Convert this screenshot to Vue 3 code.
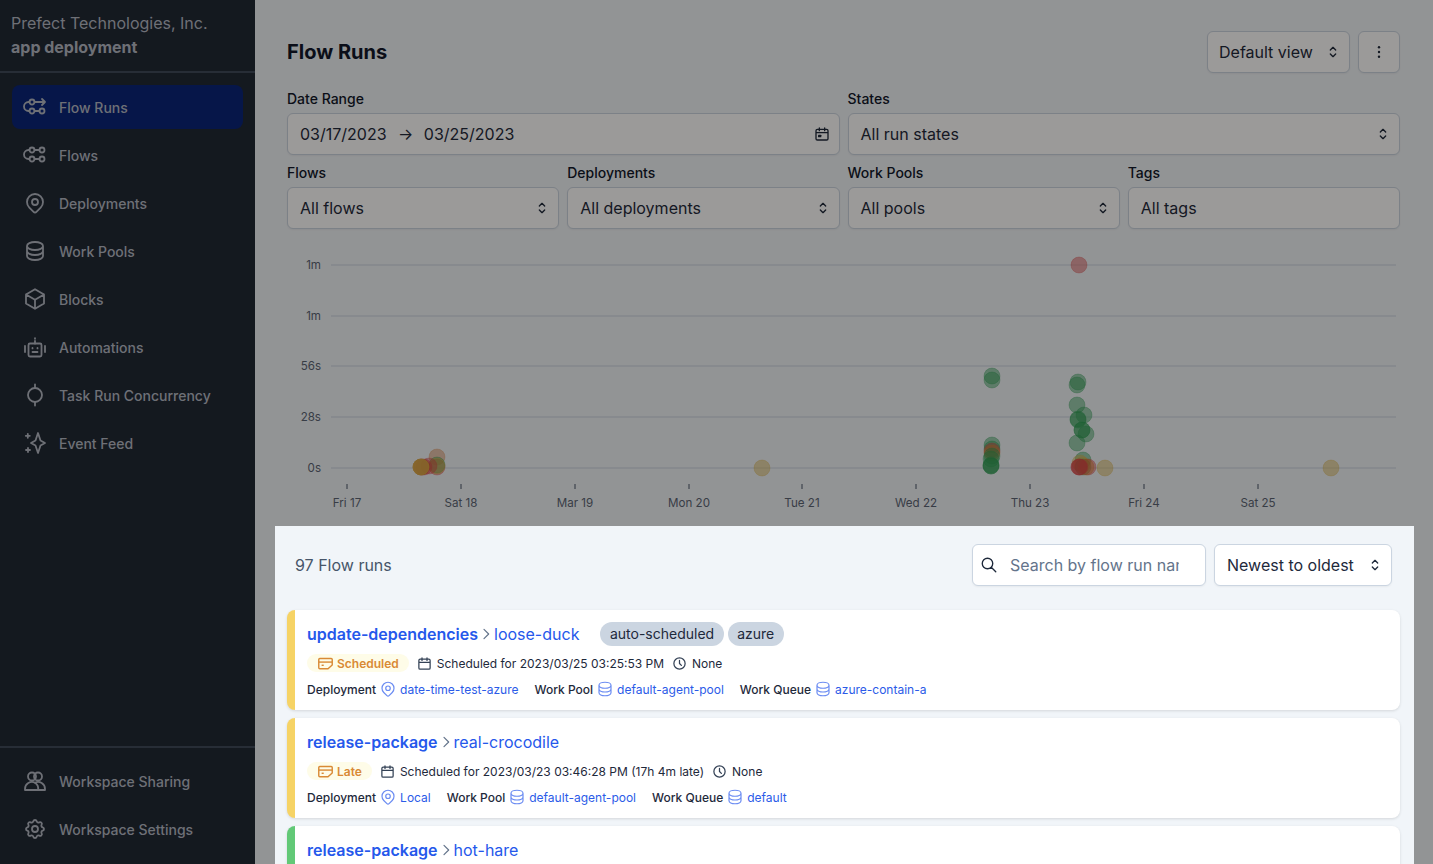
<script setup>
const icons = {
  flowRuns: ['M6.5 7H5.5a4.5 4.5 0 000 9h1', 'M11.5 7H22m-3-3l3 3-3 3', 'M11.5 16h5', 'M11.5 7a2.5 2.5 0 11-5 0 2.5 2.5 0 015 0z', 'M11.5 16a2.5 2.5 0 11-5 0 2.5 2.5 0 015 0z', 'M21.5 16a2.5 2.5 0 11-5 0 2.5 2.5 0 015 0z'],
  flows: ['M6.5 7H5.5a4.5 4.5 0 000 9h1', 'M11.5 7h5', 'M11.5 16h5', 'M11.5 7a2.5 2.5 0 11-5 0 2.5 2.5 0 015 0z', 'M21.5 7a2.5 2.5 0 11-5 0 2.5 2.5 0 015 0z', 'M11.5 16a2.5 2.5 0 11-5 0 2.5 2.5 0 015 0z', 'M21.5 16a2.5 2.5 0 11-5 0 2.5 2.5 0 015 0z'],
  pin: ['M17.657 16.657L13.414 20.9a1.998 1.998 0 01-2.827 0l-4.244-4.243a8 8 0 1111.314 0z', 'M15 11a3 3 0 11-6 0 3 3 0 016 0z'],
  database: ['M4 7v10c0 2.21 3.582 4 8 4s8-1.79 8-4V7M4 7c0 2.21 3.582 4 8 4s8-1.79 8-4M4 7c0-2.21 3.582-4 8-4s8 1.79 8 4m0 5c0 2.21-3.582 4-8 4s-8-1.79-8-4'],
  cube: ['M21 7.5l-9-5.25L3 7.5m18 0l-9 5.25m9-5.25v9l-9 5.25M3 7.5l9 5.25M3 7.5v9l9 5.25m0-9v9'],
  robot: ['M7 8.5h10a1.5 1.5 0 011.5 1.5v10a1.5 1.5 0 01-1.5 1.5H7A1.5 1.5 0 015.500 20V10A1.500 1.500 0 017 8.500z', 'M12 8.500V6', 'M12 3.200v.600', 'M9.500 13v.400', 'M14.500 13v.400', 'M9.500 17h5', 'M2 11v6', 'M22 11v6'],
  concurrency: ['M19 12a7 7 0 11-14 0 7 7 0 0114 0z', 'M12 1.500V5', 'M12 19v3.500'],
  sparkles: ['M15 2l2.500 7.500L22 12l-4.500 2.500L15 22l-2.500-7.500L8 12l4.500-2.500z', 'M4.800 2.800v4M2.800 4.800h4', 'M5 17v4M3 19h4'],
  users: ['M13 7.500a4 4 0 11-8 0 4 4 0 018 0z', 'M19 7.500a4 4 0 11-8 0 4 4 0 018 0z', 'M2 21v-1a7 7 0 0110-6.300A7 7 0 0122 20v1z', 'M12 13.700a7 7 0 013 7.300'],
  cog: ['M10.325 4.317c.426-1.756 2.924-1.756 3.35 0a1.724 1.724 0 002.573 1.066c1.543-.94 3.31.826 2.37 2.37a1.724 1.724 0 001.065 2.572c1.756.426 1.756 2.924 0 3.35a1.724 1.724 0 00-1.066 2.573c.94 1.543-.826 3.31-2.37 2.37a1.724 1.724 0 00-2.572 1.065c-.426 1.756-2.924 1.756-3.35 0a1.724 1.724 0 00-2.573-1.066c-1.543.94-3.31-.826-2.37-2.37a1.724 1.724 0 00-1.065-2.572c-1.756-.426-1.756-2.924 0-3.35a1.724 1.724 0 001.066-2.573c-.94-1.543.826-3.31 2.37-2.37.996.608 2.296.07 2.572-1.065z', 'M15 12a3 3 0 11-6 0 3 3 0 016 0z'],
  calendar: ['M8 7V3m8 4V3M3 10h18M5 21h14a2 2 0 002-2V7a2 2 0 00-2-2H5a2 2 0 00-2 2v12a2 2 0 002 2z'],
  clock: ['M12 7v5l3 3m6-3a9 9 0 11-18 0 9 9 0 0118 0z'],
  search: ['M21 21l-6-6m2-5a7 7 0 11-14 0 7 7 0 0114 0z'],
  selector: ['M8 9l4-4 4 4m0 6l-4 4-4-4'],
  chevron: ['M9 5l7 7-7 7'],
  scheduled: ['M4 5h16a1.500 1.500 0 011.500 1.500V14l-6 5.500H4a1.500 1.500 0 01-1.500-1.500V6.500A1.500 1.500 0 014 5z', 'M2.500 10h19', 'M6.500 14.500h3'],
}

const navItems = [
  { label: 'Flow Runs', icon: 'flowRuns', active: true },
  { label: 'Flows', icon: 'flows' },
  { label: 'Deployments', icon: 'pin' },
  { label: 'Work Pools', icon: 'database' },
  { label: 'Blocks', icon: 'cube' },
  { label: 'Automations', icon: 'robot' },
  { label: 'Task Run Concurrency', icon: 'concurrency' },
  { label: 'Event Feed', icon: 'sparkles' },
]
const footerItems = [
  { label: 'Workspace Sharing', icon: 'users' },
  { label: 'Workspace Settings', icon: 'cog' },
]

const filters = [
  { label: 'Flows', value: 'All flows', select: true },
  { label: 'Deployments', value: 'All deployments', select: true },
  { label: 'Work Pools', value: 'All pools', select: true },
  { label: 'Tags', value: 'All tags' },
]

// chart coordinates are page pixels, the svg viewBox starts at the chart's corner
const gridLines = [
  { y: 265, label: '1m' },
  { y: 316, label: '1m' },
  { y: 366, label: '56s' },
  { y: 417, label: '28s' },
  { y: 468, label: '0s' },
]
const ticks = [
  { x: 347, label: 'Fri 17' },
  { x: 461, label: 'Sat 18' },
  { x: 575, label: 'Mar 19' },
  { x: 689, label: 'Mon 20' },
  { x: 802, label: 'Tue 21' },
  { x: 916, label: 'Wed 22' },
  { x: 1030, label: 'Thu 23' },
  { x: 1144, label: 'Fri 24' },
  { x: 1258, label: 'Sat 25' },
]
const colors = { g: '#2f9e55', r: '#d94848', y: '#d9b44a', o: '#e08030', b: '#d98a50' }
const dots = [
  ['r', 1079, 265], ['y', 762, 468], ['y', 1105, 468], ['y', 1331, 468],
  ['g', 992, 376], ['g', 992, 380], ['g', 992, 445], ['g', 992, 449], ['r', 992, 451], ['o', 992, 453], ['g', 992, 456], ['g', 991, 459], ['g', 991, 465], ['g', 991, 466], ['g', 991, 466],
  ['g', 1078, 382], ['g', 1077, 385], ['g', 1077, 405], ['g', 1084, 415], ['g', 1078, 419], ['g', 1078, 420], ['g', 1082, 430], ['g', 1082, 430], ['g', 1086, 434], ['g', 1077, 443], ['g', 1083, 460],
  ['y', 1080, 463], ['y', 1082, 465], ['g', 1083, 467], ['r', 1088, 467], ['o', 1086, 467], ['r', 1079, 467], ['r', 1080, 467], ['r', 1079, 467],
  ['b', 437, 457], ['r', 437, 467], ['g', 437, 465], ['y', 437, 466], ['r', 429, 466], ['r', 424, 467], ['r', 422, 467], ['o', 421, 467], ['o', 421, 467], ['y', 421, 467], ['y', 421, 467],
]

const runs = [
  {
    flow: 'update-dependencies', name: 'loose-duck', tags: ['auto-scheduled', 'azure'], color: '#f6d365',
    state: 'Scheduled', start: 'Scheduled for 2023/03/25 03:25:53 PM',
    deployment: 'date-time-test-azure', pool: 'default-agent-pool', queue: 'azure-contain-a',
  },
  {
    flow: 'release-package', name: 'real-crocodile', tags: [], color: '#f6d365',
    state: 'Late', start: 'Scheduled for 2023/03/23 03:46:28 PM (17h 4m late)',
    deployment: 'Local', pool: 'default-agent-pool', queue: 'default',
  },
  {
    flow: 'release-package', name: 'hot-hare', tags: [], color: '#62c977',
    state: 'Completed', start: 'None',
    deployment: 'Local', pool: 'default-agent-pool', queue: 'default',
  },
]
</script>

<template>
  <div class="app">
    <aside class="sidebar">
      <div class="org">
        <div class="org-name">Prefect Technologies, Inc.</div>
        <div class="org-app">app deployment</div>
      </div>
      <nav class="nav">
        <a v-for="item in navItems" :key="item.label" class="nav-item" :class="{ active: item.active }">
          <svg class="nav-icon" viewBox="0 0 24 24"><path v-for="d in icons[item.icon]" :key="d" :d="d" /></svg>
          {{ item.label }}
        </a>
      </nav>
      <div class="nav nav-footer">
        <a v-for="item in footerItems" :key="item.label" class="nav-item">
          <svg class="nav-icon" viewBox="0 0 24 24"><path v-for="d in icons[item.icon]" :key="d" :d="d" /></svg>
          {{ item.label }}
        </a>
      </div>
    </aside>

    <main class="main">
      <header class="page-head">
        <h1>Flow Runs</h1>
        <div class="head-actions">
          <div class="box view-select">
            <span>Default view</span>
            <svg class="sel-icon" viewBox="0 0 24 24"><path :d="icons.selector[0]" /></svg>
          </div>
          <div class="box more-btn">
            <svg viewBox="0 0 20 20" width="16" height="16"><circle cx="10" cy="4" r="1.500" /><circle cx="10" cy="10" r="1.500" /><circle cx="10" cy="16" r="1.500" /></svg>
          </div>
        </div>
      </header>

      <section class="filters">
        <div class="field wide">
          <label>Date Range</label>
          <div class="box">
            <span class="dates">03/17/2023 <span class="arrow">→</span> 03/25/2023</span>
            <svg class="sel-icon cal-icon" viewBox="0 0 24 24"><path :d="icons.calendar[0]" /><path d="M7 14h3v2H7z" /></svg>
          </div>
        </div>
        <div class="field wide">
          <label>States</label>
          <div class="box">
            <span>All run states</span>
            <svg class="sel-icon" viewBox="0 0 24 24"><path :d="icons.selector[0]" /></svg>
          </div>
        </div>
        <div v-for="f in filters" :key="f.label" class="field">
          <label>{{ f.label }}</label>
          <div class="box">
            <span>{{ f.value }}</span>
            <svg v-if="f.select" class="sel-icon" viewBox="0 0 24 24"><path :d="icons.selector[0]" /></svg>
          </div>
        </div>
      </section>

      <svg class="chart" viewBox="287 245 1113 281">
        <g v-for="line in gridLines" :key="line.y">
          <line x1="331" x2="1396" :y1="line.y" :y2="line.y" class="grid-line" />
          <text x="321" :y="line.y + 4" text-anchor="end" class="axis-text">{{ line.label }}</text>
        </g>
        <g v-for="tick in ticks" :key="tick.x">
          <line :x1="tick.x" :x2="tick.x" y1="484" y2="489" class="tick" />
          <text :x="tick.x" y="507" text-anchor="middle" class="axis-text">{{ tick.label }}</text>
        </g>
        <circle v-for="(dot, i) in dots" :key="i" class="dot" :cx="dot[1]" :cy="dot[2]" r="8" :fill="colors[dot[0]]" :stroke="colors[dot[0]]" />
      </svg>

      <!-- the huge box-shadow is the dimmed backdrop around this highlighted section -->
      <section class="runs">
        <div class="runs-head">
          <span class="runs-count">97 Flow runs</span>
          <div class="runs-tools">
            <div class="box search">
              <svg class="search-icon" viewBox="0 0 24 24"><path :d="icons.search[0]" /></svg>
              <input type="text" placeholder="Search by flow run name" />
            </div>
            <div class="box sort">
              <span>Newest to oldest</span>
              <svg class="sel-icon" viewBox="0 0 24 24"><path :d="icons.selector[0]" /></svg>
            </div>
          </div>
        </div>

        <div class="run-list">
          <article v-for="run in runs" :key="run.name" class="run" :style="{ borderLeftColor: run.color }">
            <div class="run-title">
              <a class="flow-name">{{ run.flow }}</a>
              <svg class="chev" viewBox="0 0 24 24"><path :d="icons.chevron[0]" /></svg>
              <a class="run-name">{{ run.name }}</a>
              <div v-if="run.tags.length" class="tags">
                <span v-for="tag in run.tags" :key="tag" class="tag">{{ tag }}</span>
              </div>
            </div>
            <div class="run-row">
              <span class="state">
                <svg viewBox="0 0 24 24"><path v-for="d in icons.scheduled" :key="d" :d="d" /></svg>
                {{ run.state }}
              </span>
              <span class="meta">
                <svg class="meta-icon" viewBox="0 0 24 24"><path :d="icons.calendar[0]" /></svg>
                {{ run.start }}
              </span>
              <span class="meta">
                <svg class="meta-icon" viewBox="0 0 24 24"><path :d="icons.clock[0]" /></svg>
                None
              </span>
            </div>
            <div class="run-row links">
              <span class="rel">
                <b>Deployment</b>
                <svg class="rel-icon" viewBox="0 0 24 24"><path v-for="d in icons.pin" :key="d" :d="d" /></svg>
                <a>{{ run.deployment }}</a>
              </span>
              <span class="rel">
                <b>Work Pool</b>
                <svg class="rel-icon" viewBox="0 0 24 24"><path :d="icons.database[0]" /></svg>
                <a>{{ run.pool }}</a>
              </span>
              <span class="rel">
                <b>Work Queue</b>
                <svg class="rel-icon" viewBox="0 0 24 24"><path :d="icons.database[0]" /></svg>
                <a>{{ run.queue }}</a>
              </span>
            </div>
          </article>
        </div>
      </section>
    </main>
  </div>
</template>

<style>
html,
body {
  margin: 0;
  overflow: hidden;
}
</style>

<style scoped>
.app {
  display: flex;
  width: 100%;
  height: 864px;
  overflow: hidden;
  background: #f1f5f9;
  color: #0f172a;
  font-family: Inter, "Liberation Sans", sans-serif;
  font-size: 16px;
}

/* Sidebar */
.sidebar {
  flex: none;
  width: 255px;
  display: flex;
  flex-direction: column;
  background: #1f2835;
  color: #b4bac5;
}

.org {
  box-sizing: border-box;
  height: 73px;
  padding: 11px 11px 0;
  border-bottom: 2px solid #3f4a5a;
  line-height: 24px;
}

.org-app {
  font-weight: 700;
}

.nav {
  display: flex;
  flex-direction: column;
  gap: 4px;
  padding: 12px;
  flex: 1;
}

.nav-footer {
  flex: none;
  padding: 11px 12px 13px;
  border-top: 2px solid #3f4a5a;
}

.nav-item {
  display: flex;
  align-items: center;
  gap: 12px;
  height: 44px;
  padding: 0 11px;
  border-radius: 8px;
  font-size: 14px;
  font-weight: 500;
}

.nav-item.active {
  background: #08247a;
}

.nav-icon {
  flex: none;
  width: 24px;
  height: 24px;
  fill: none;
  stroke: currentColor;
  stroke-width: 1.800;
  stroke-linecap: round;
  stroke-linejoin: round;
}

/* Main */
.main {
  flex: 1;
  min-width: 0;
  padding: 31px 33px 0 32px;
}

.page-head {
  display: flex;
  align-items: center;
  justify-content: space-between;
}

.page-head h1 {
  margin: 0;
  font-size: 20px;
  font-weight: 700;
}

.head-actions {
  display: flex;
  gap: 8px;
}

.box {
  display: flex;
  align-items: center;
  justify-content: space-between;
  box-sizing: border-box;
  height: 42px;
  padding: 0 12px;
  background: #fff;
  border: 1px solid #cbd5e1;
  border-radius: 6px;
  box-shadow: 0 1px 2px rgba(0, 0, 0, 0.05);
  color: #1e293b;
}

.view-select {
  width: 143px;
  padding-left: 11px;
}

.more-btn {
  width: 42px;
  justify-content: center;
}

.more-btn svg {
  fill: #1e293b;
}

.sel-icon {
  flex: none;
  width: 16px;
  height: 16px;
  margin-right: -4px;
  fill: none;
  stroke: #1e293b;
  stroke-width: 2;
  stroke-linecap: round;
  stroke-linejoin: round;
}

.cal-icon {
  margin-right: -3px;
}

.filters {
  display: grid;
  grid-template-columns: repeat(4, 1fr);
  gap: 8px;
  margin-top: 16px;
}

.field {
  min-width: 0;
}

.field.wide {
  grid-column: span 2;
}

.field label {
  display: block;
  margin-bottom: 4px;
  font-size: 14px;
  line-height: 20px;
  font-weight: 500;
}

.dates {
  white-space: pre;
}

.arrow {
  margin: 0 6px 0 7px;
}

.chart {
  display: block;
  width: 1113px;
  height: 281px;
  margin-top: 16px;
}

.grid-line {
  stroke: #cbd5e1;
  stroke-width: 1;
}

.tick {
  stroke: #475569;
  stroke-width: 1;
}

.axis-text {
  font-size: 11.600px;
  fill: #5b6575;
}

.dot {
  fill-opacity: 0.45;
  stroke-opacity: 0.3;
  stroke-width: 1;
}

/* Highlighted list */
.runs {
  position: relative;
  z-index: 10;
  margin: 0 -14px 0 -12px;
  padding: 18px 14px 0 12px;
  background: #f1f5f9;
  box-shadow: 0 0 0 3000px rgba(6, 3, 1, 0.4);
}

.runs-head {
  display: flex;
  align-items: center;
  justify-content: space-between;
  padding: 0 8px;
  margin-bottom: 24px;
}

.runs-count {
  color: #475569;
}

.runs-tools {
  display: flex;
  gap: 8px;
}

.search {
  width: 234px;
  justify-content: flex-start;
  gap: 12px;
  padding: 0 26px 0 7px;
}

.search-icon {
  flex: none;
  width: 18px;
  height: 18px;
  fill: none;
  stroke: #1e293b;
  stroke-width: 1.800;
  stroke-linecap: round;
  stroke-linejoin: round;
}

.search input {
  flex: 1;
  min-width: 0;
  padding: 0;
  border: 0;
  outline: 0;
  background: none;
  font: inherit;
  color: inherit;
}

.search input::placeholder {
  color: #64748b;
  opacity: 1;
}

.sort {
  width: 178px;
}

.run-list {
  display: flex;
  flex-direction: column;
  gap: 8px;
}

.run {
  display: flex;
  flex-direction: column;
  gap: 8px;
  box-sizing: border-box;
  height: 100px;
  padding: 12px;
  background: #fff;
  border-left: 8px solid;
  border-radius: 8px;
  box-shadow: 0 1px 3px rgba(0, 0, 0, 0.12);
  flex: none;
}

.run-title {
  display: flex;
  align-items: center;
  height: 24px;
}

.flow-name {
  font-weight: 600;
  color: #2558eb;
}

.run-name {
  color: #2558eb;
}

.chev {
  width: 16px;
  height: 16px;
  fill: none;
  stroke: #64748b;
  stroke-width: 1.800;
  stroke-linecap: round;
  stroke-linejoin: round;
}

.tags {
  display: flex;
  gap: 4px;
  margin-left: 21px;
}

.tag {
  padding: 0 9.500px;
  line-height: 24px;
  font-size: 14px;
  background: #cbd5e1;
  border-radius: 12px;
  color: #1e293b;
}

.run-row {
  display: flex;
  align-items: center;
  gap: 8px;
  height: 18px;
  font-size: 12px;
  color: #1e293b;
}

.run-row.links {
  gap: 16px;
}

.state {
  display: flex;
  align-items: center;
  gap: 3px;
  height: 18px;
  padding: 0 10px;
  background: #fefce8;
  border-radius: 9px;
  color: #d98a35;
  font-weight: 600;
}

.state svg {
  width: 17px;
  height: 17px;
  fill: none;
  stroke: #d98a35;
  stroke-width: 2;
}

.meta {
  display: flex;
  align-items: center;
  gap: 5px;
}

.meta-icon {
  width: 15px;
  height: 15px;
  fill: none;
  stroke: #334155;
  stroke-width: 2;
  stroke-linecap: round;
  stroke-linejoin: round;
}

.rel {
  display: flex;
  align-items: center;
  gap: 5px;
}

.rel b {
  font-weight: 500;
}

.rel a {
  color: #2b5be8;
}

.rel-icon {
  width: 18px;
  height: 18px;
  margin: 0 -2px;
  fill: none;
  stroke: #6b8cf2;
  stroke-width: 1.600;
  stroke-linecap: round;
  stroke-linejoin: round;
}
</style>
